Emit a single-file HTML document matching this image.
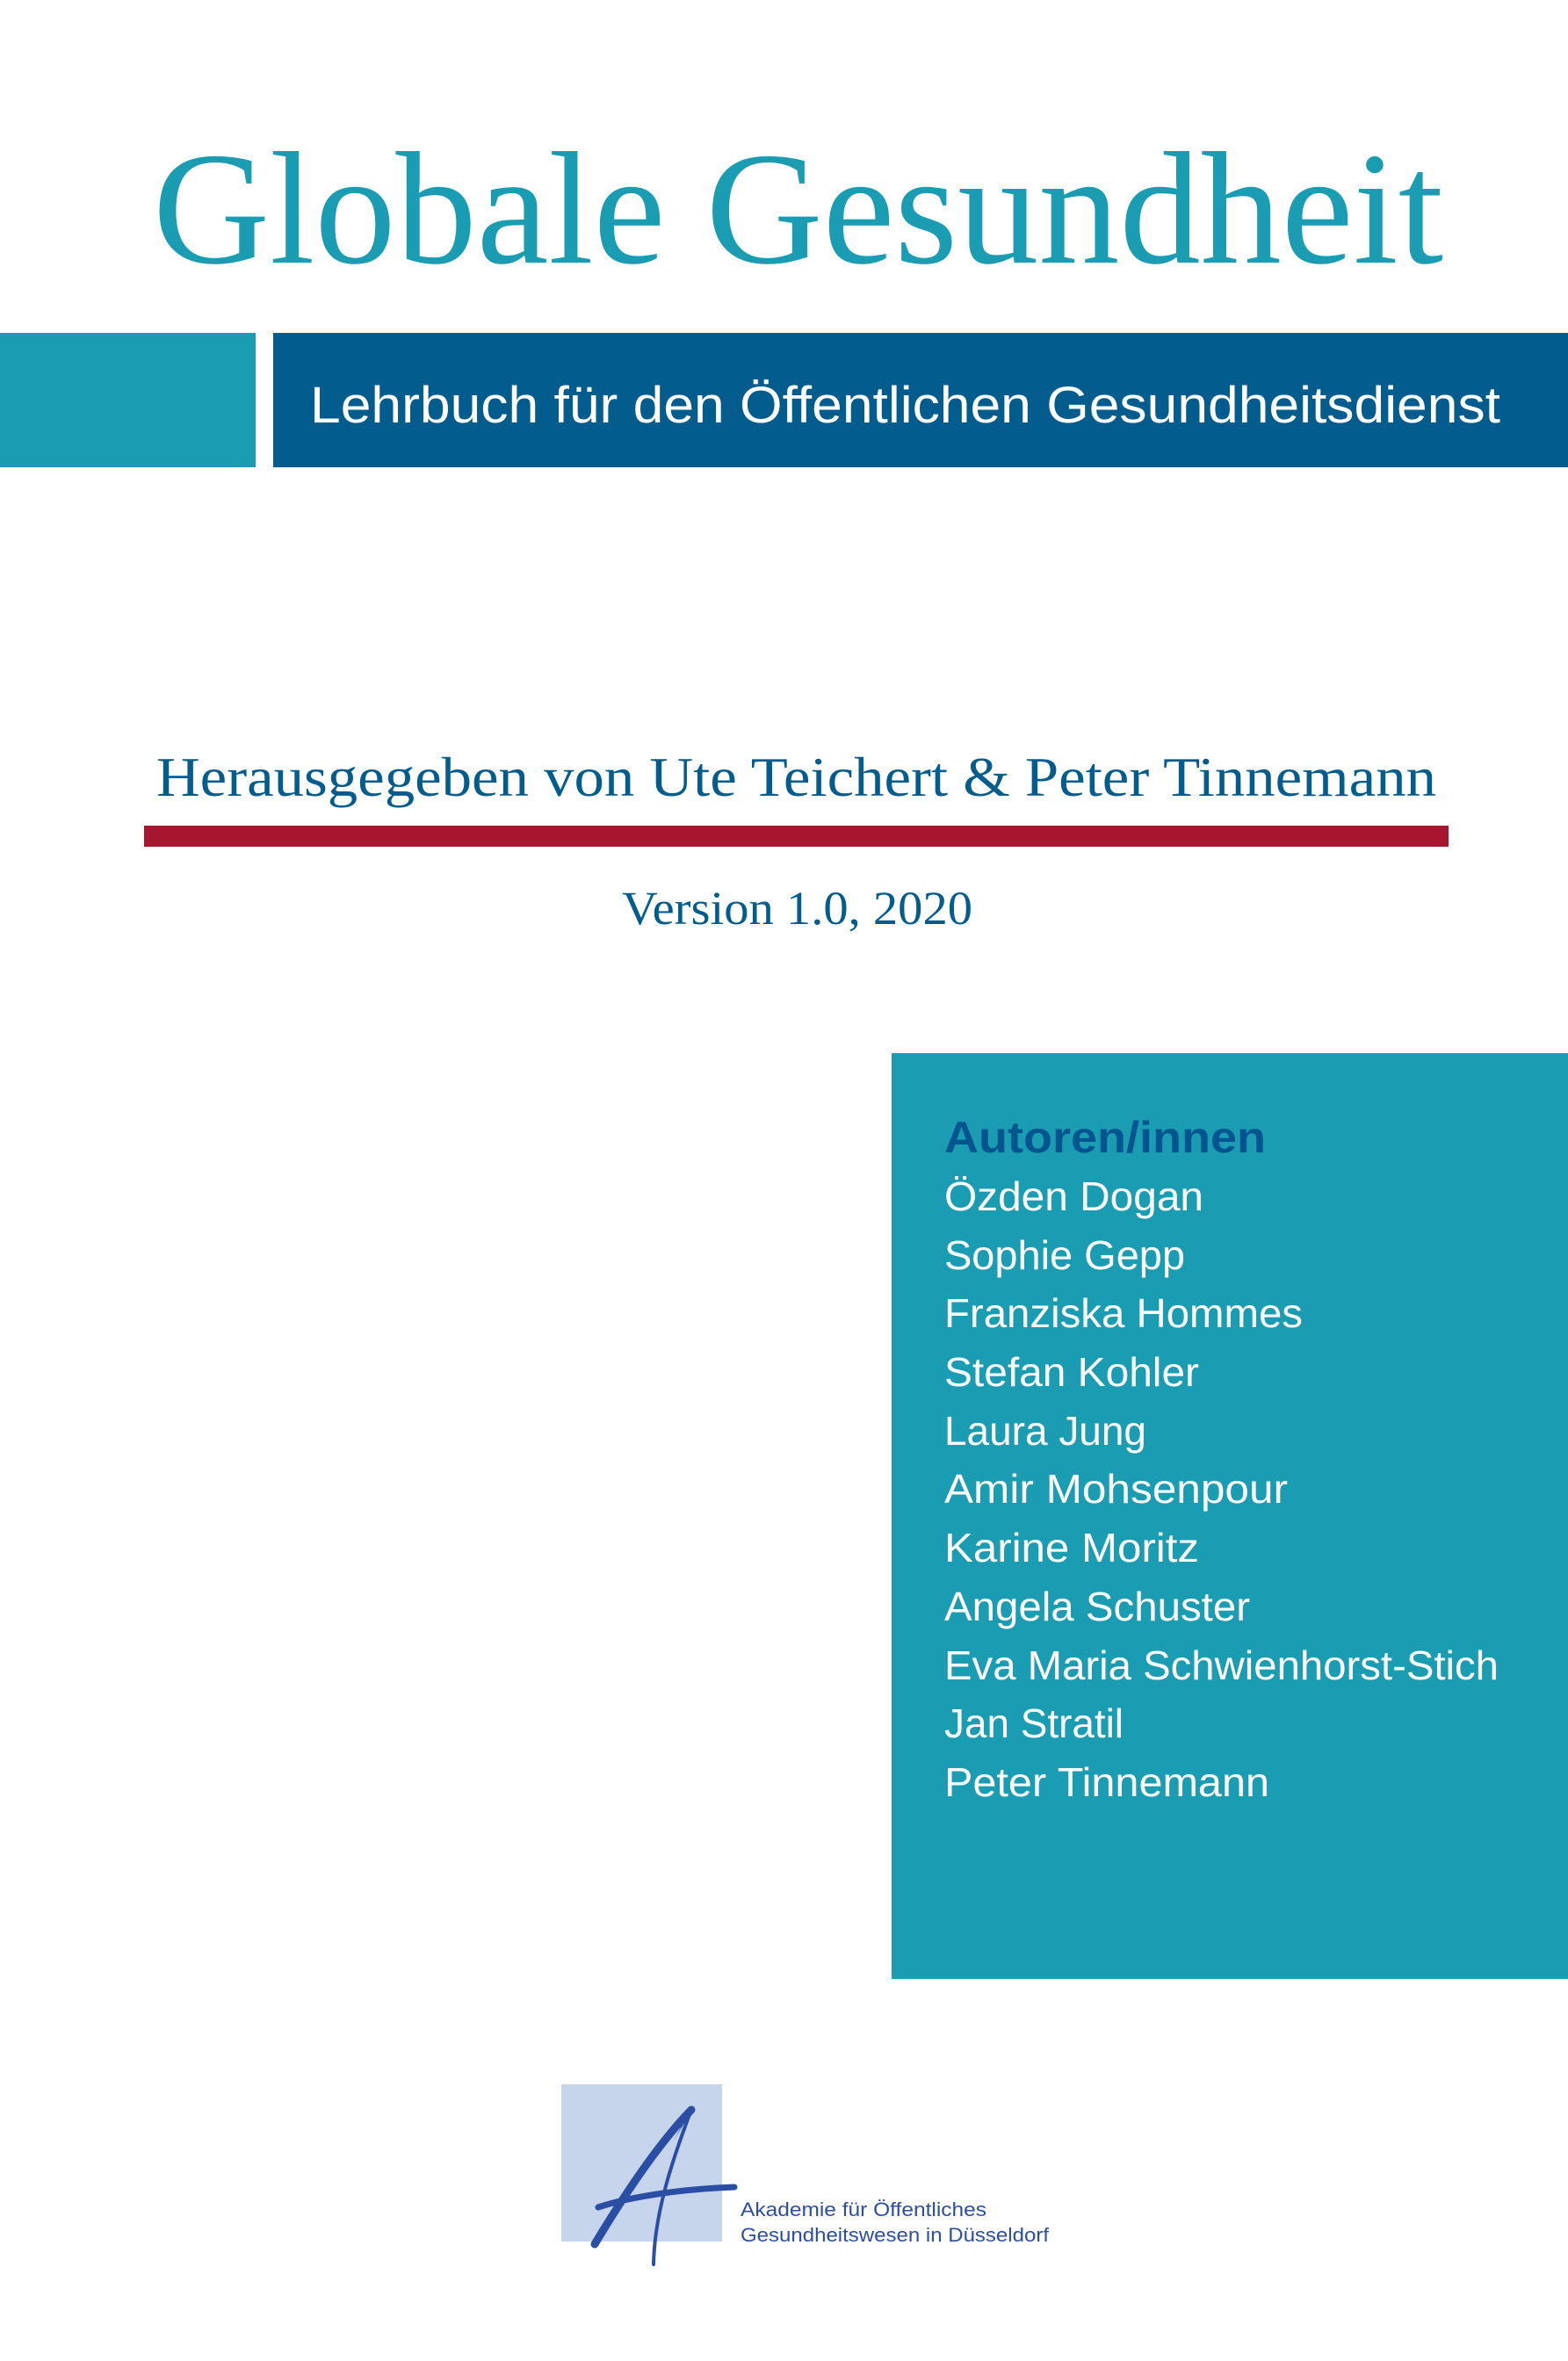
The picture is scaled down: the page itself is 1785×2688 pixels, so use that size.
<!DOCTYPE html>
<html><head><meta charset="utf-8"><style>
html,body{margin:0;padding:0;background:#fff;}
svg{display:block}
</style></head><body>
<svg width="1785" height="2688" viewBox="0 0 1785 2688" xmlns="http://www.w3.org/2000/svg">
<rect width="1785" height="2688" fill="#fff"/>
<text x="174" y="299" font-family="Liberation Serif, serif" font-size="183" fill="#1a9cb3" textLength="1469" lengthAdjust="spacingAndGlyphs">Globale Gesundheit</text>
<rect x="0" y="379" width="291" height="153" fill="#1a9cb3"/>
<rect x="311" y="379" width="1474" height="153" fill="#025c8e"/>
<text x="353" y="481" font-family="Liberation Sans, sans-serif" font-size="58" fill="#fff" textLength="1355" lengthAdjust="spacingAndGlyphs">Lehrbuch für den Öffentlichen Gesundheitsdienst</text>
<text x="178" y="906" font-family="Liberation Serif, serif" font-size="63" fill="#025c8e" textLength="1457" lengthAdjust="spacingAndGlyphs">Herausgegeben von Ute Teichert &amp; Peter Tinnemann</text>
<rect x="164" y="940" width="1485" height="24" fill="#a8152f"/>
<text x="708" y="1052" font-family="Liberation Serif, serif" font-size="54" fill="#025c8e" textLength="399" lengthAdjust="spacingAndGlyphs">Version 1.0, 2020</text>
<rect x="1015" y="1199" width="770" height="1054" fill="#1a9cb3"/>
<text x="1075" y="1312" font-family="Liberation Sans, sans-serif" font-weight="bold" font-size="50" fill="#02558e" textLength="366" lengthAdjust="spacingAndGlyphs">Autoren/innen</text>
<g font-family="Liberation Sans, sans-serif" font-size="46" fill="#fff">
<text x="1075" y="1378" textLength="295" lengthAdjust="spacingAndGlyphs">Özden Dogan</text>
<text x="1075" y="1445" textLength="274" lengthAdjust="spacingAndGlyphs">Sophie Gepp</text>
<text x="1075" y="1511" textLength="408" lengthAdjust="spacingAndGlyphs">Franziska Hommes</text>
<text x="1075" y="1578" textLength="290" lengthAdjust="spacingAndGlyphs">Stefan Kohler</text>
<text x="1075" y="1645" textLength="230" lengthAdjust="spacingAndGlyphs">Laura Jung</text>
<text x="1075" y="1711" textLength="391" lengthAdjust="spacingAndGlyphs">Amir Mohsenpour</text>
<text x="1075" y="1778" textLength="290" lengthAdjust="spacingAndGlyphs">Karine Moritz</text>
<text x="1075" y="1845" textLength="348" lengthAdjust="spacingAndGlyphs">Angela Schuster</text>
<text x="1075" y="1912" textLength="631" lengthAdjust="spacingAndGlyphs">Eva Maria Schwienhorst-Stich</text>
<text x="1075" y="1978" textLength="204" lengthAdjust="spacingAndGlyphs">Jan Stratil</text>
<text x="1075" y="2045" textLength="370" lengthAdjust="spacingAndGlyphs">Peter Tinnemann</text>
</g>
<rect x="639" y="2373" width="183" height="179" fill="#c6d4ec"/>
<g fill="none" stroke="#2a4ea3" stroke-linecap="round">
<path d="M787 2402 C750 2440 710 2500 677 2555" stroke-width="9"/>
<path d="M787 2402 C765 2460 745 2520 744 2578" stroke-width="4"/>
<path d="M681 2513 C720 2500 780 2492 836 2490" stroke-width="7"/>
</g>
<path d="M787 2400 L781 2414 L767 2437 Z" fill="#2a4ea3"/>
<g font-family="Liberation Sans, sans-serif" font-size="22" fill="#2a4ea3">
<text x="843" y="2523" textLength="280" lengthAdjust="spacingAndGlyphs">Akademie für Öffentliches</text>
<text x="843" y="2552" textLength="351" lengthAdjust="spacingAndGlyphs">Gesundheitswesen in Düsseldorf</text>
</g>
</svg>
</body></html>
